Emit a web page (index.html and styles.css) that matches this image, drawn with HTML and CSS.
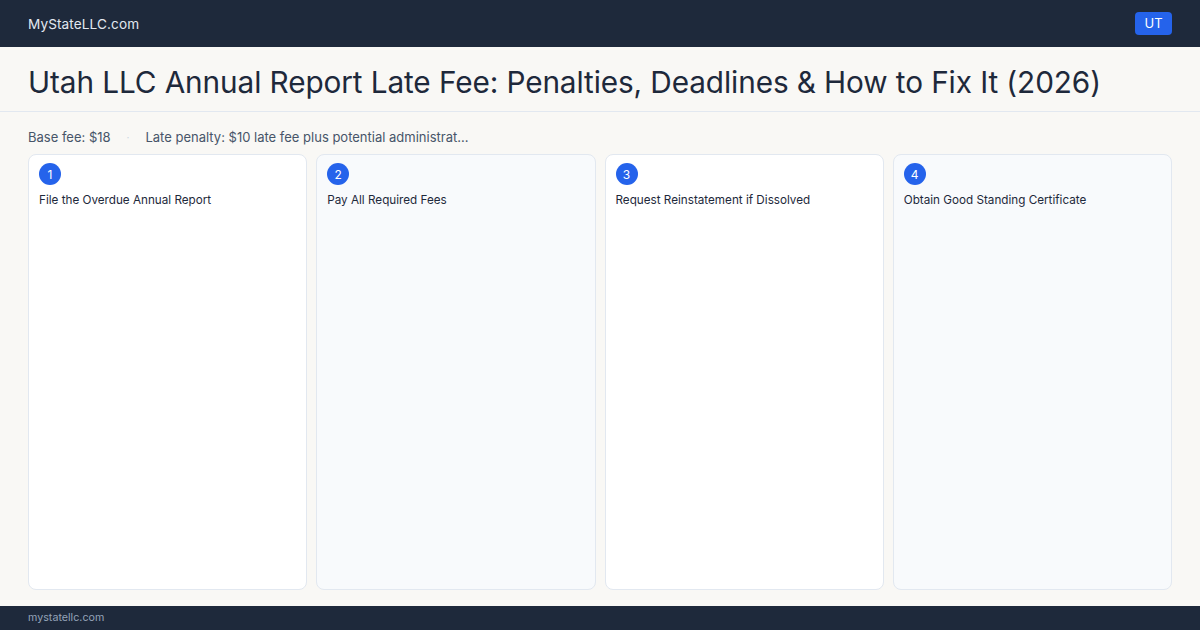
FILE: index.html
```html
<!DOCTYPE html>
<html lang="en">
<head>
    <meta charset="UTF-8">
    <meta name="viewport" content="width=device-width, initial-scale=1.0">
    <title>Utah LLC Annual Report Late Fee</title>
    <link rel="stylesheet" href="styles.css">
</head>
<body>
    <!-- Barra superior -->
    <header class="topbar">
        <span class="logo">MyStateLLC.com</span>
        <span class="state-badge">UT</span>
    </header>

    <div class="title-bar">
        <h1>Utah LLC Annual Report Late Fee: Penalties, Deadlines &amp; How to Fix It (2026)</h1>
    </div>

    <main class="content">
        <div class="meta">
            <span>Base fee: $18</span>
            <span class="dot">·</span>
            <span>Late penalty: $10 late fee plus potential administrat...</span>
        </div>

        <div class="steps">
            <div class="step">
                <span class="step-num">1</span>
                <p>File the Overdue Annual Report</p>
            </div>
            <div class="step alt">
                <span class="step-num">2</span>
                <p>Pay All Required Fees</p>
            </div>
            <div class="step">
                <span class="step-num">3</span>
                <p>Request Reinstatement if Dissolved</p>
            </div>
            <div class="step alt">
                <span class="step-num">4</span>
                <p>Obtain Good Standing Certificate</p>
            </div>
        </div>
    </main>

    <footer class="footer">mystatellc.com</footer>
</body>
</html>
```

FILE: styles.css
```css
/* Layout geral */
html, body {
    height: 100%;
}

body {
    font-family: 'Inter', 'Liberation Sans', sans-serif;
    margin: 0;
    padding: 0;
    background-color: #f9f8f5;
    color: #1e293b;
    display: flex;
    flex-direction: column;
}

.topbar {
    background-color: #1e293b;
    height: 47px;
    padding: 0 28px;
    display: flex;
    align-items: center;
    justify-content: space-between;
    box-sizing: border-box;
}

.logo {
    color: #e2e8f0;
    font-size: 13.6px;
    letter-spacing: 0.1px;
}

.state-badge {
    background-color: #2563eb;
    color: white;
    font-size: 13px;
    width: 37px;
    height: 23px;
    line-height: 23px;
    text-align: center;
    border-radius: 4px;
}

.title-bar {
    height: 65px;
    padding: 5px 28px 0;
    display: flex;
    align-items: center;
    border-bottom: 1px solid #e2e8f0;
    box-sizing: border-box;
}

.title-bar h1 {
    margin: 0;
    font-size: 29.75px;
    font-weight: 400;
    color: #1e293b;
    letter-spacing: -0.1px;
}

.content {
    flex: 1;
    padding: 17px 28px 16px;
    display: flex;
    flex-direction: column;
    min-height: 0;
}

.meta {
    display: flex;
    gap: 16px;
    font-size: 13px;
    color: #475569;
    height: 16px;
    line-height: 16px;
    margin-bottom: 9px;
}

.meta .dot {
    color: #cbd5e1;
    font-size: 10px;
}

.steps {
    flex: 1;
    display: grid;
    grid-template-columns: repeat(4, 1fr);
    gap: 9px;
}

.step {
    background-color: #fff;
    border: 1px solid #e2e8f0;
    border-radius: 8px;
    padding: 8px 10px;
}

.step.alt {
    background-color: #f8fafc;
}

.step-num {
    display: flex;
    align-items: center;
    justify-content: center;
    width: 22px;
    height: 22px;
    border-radius: 50%;
    background-color: #2563eb;
    color: white;
    font-size: 12px;
}

.step p {
    margin: 8px 0 0;
    font-size: 11.7px;
    color: #1e293b;
}

.footer {
    background-color: #1e293b;
    color: #94a3b8;
    font-size: 10.7px;
    height: 24px;
    line-height: 24px;
    padding: 0 28px;
}
```
